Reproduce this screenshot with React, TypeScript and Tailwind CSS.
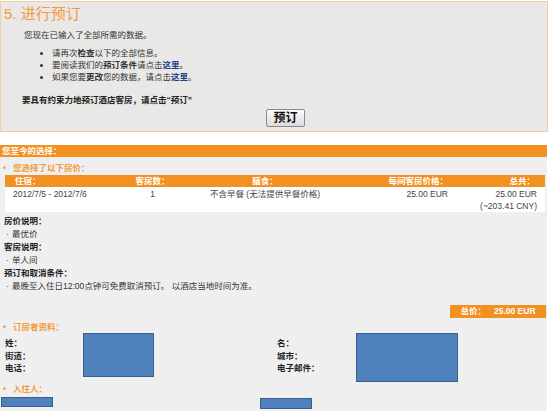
import React from "react";

const font = "font-['Liberation_Sans','Noto_Sans_CJK_SC',sans-serif]";

const Bullet = ({ children }: { children: React.ReactNode }) => (
  <div className="flex">
    <span className="w-[8px] pl-[2px] text-[#555]">·</span>
    <span>{children}</span>
  </div>
);

const SectionHead = ({ children, className = "" }: { children: React.ReactNode; className?: string }) => (
  <div className={`flex font-bold text-[#f39a3a] ${className}`}>
    <span className="w-[13px] pl-[3px]">•</span>
    <span>{children}</span>
  </div>
);

export default function App() {
  return (
    <div className={`w-[553px] h-[411px] overflow-hidden bg-white text-[8.5px] text-[#333] ${font}`}>
      {/* step panel */}
      <div className="mt-[1px] h-[131px] w-[548px] border border-[#f3cfa0] bg-[#e9e8e6]">
        <h1 className="pl-[3px] pt-[3px] text-[15px] leading-[18px] text-[#f39a3c]">5. 进行预订</h1>
        <p className="ml-[23px] mt-[6px] leading-[12px]">您现在已输入了全部所需的数据。</p>
        <ul className="mt-[6px] list-disc pl-[51px] leading-[12px]">
          <li>
            请再次<b>检查</b>以下的全部信息。
          </li>
          <li>
            要阅读我们的<b>预订条件</b>请点击<b className="text-[#1d3f8c]">这里</b>。
          </li>
          <li>
            如果您要<b>更改</b>您的数据，请点击<b className="text-[#1d3f8c]">这里</b>。
          </li>
        </ul>
        <p className="ml-[21px] mt-[11px] font-bold leading-[12px] text-[#222]">
          要具有约束力地预订酒店客房，请点击“预订”
        </p>
        <button className="ml-[265px] mt-[3px] h-[18px] w-[39px] rounded-[2px] border border-[#8a8a8a] bg-gradient-to-b from-[#fbfbfb] to-[#dcdcdc] text-[12px] font-bold leading-[16px] text-[#111]">
          预订
        </button>
      </div>

      {/* selection header */}
      <div className="mt-[13px] h-[12px] w-[547px] bg-[#f39022] pl-[2px] font-bold leading-[12px] text-white">
        您至今的选择：
      </div>

      <div className="h-[254px] w-[547px] bg-[#efefef]">
        <SectionHead className="pt-[5px] leading-[12px]">您选择了以下房价：</SectionHead>

        {/* rate table */}
        <div className="mx-[5px] mt-[1px] w-[540px]">
          <div className="grid h-[12px] grid-cols-[110px_75px_150px_108px_97px] bg-[#f39022] font-bold leading-[12px] text-white">
            <span className="pl-[10px]">住宿：</span>
            <span className="text-center">客房数：</span>
            <span className="text-center">膳食：</span>
            <span className="text-right">每间客房价格：</span>
            <span className="pr-[10px] text-right">总共：</span>
          </div>
          <div className="grid h-[25px] grid-cols-[110px_75px_150px_108px_97px] bg-white pt-[1px] leading-[12px] text-[#444]">
            <span className="pl-[8px]">2012/7/5 - 2012/7/6</span>
            <span className="text-center">1</span>
            <span className="text-center">不含早餐 (无法提供早餐价格)</span>
            <span className="text-right">25.00 EUR</span>
            <span className="pr-[8px] text-right">
              25.00 EUR
              <br />
              (~203.41 CNY)
            </span>
          </div>
        </div>

        {/* descriptions */}
        <div className="mt-[3px] pl-[4px] leading-[13px]">
          <div className="font-bold text-[#222]">房价说明：</div>
          <Bullet>最优价</Bullet>
          <div className="font-bold text-[#222]">客房说明：</div>
          <Bullet>单人间</Bullet>
          <div className="font-bold text-[#222]">预订和取消条件：</div>
          <Bullet>最晚至入住日12:00点钟可免费取消预订。 以酒店当地时间为准。</Bullet>
        </div>

        <div className="mt-[12px] flex justify-end pr-[1px]">
          <div className="flex h-[13px] w-[96px] items-center justify-center gap-[8px] bg-[#f39022] font-bold text-white">
            <span>总价：</span>
            <span>25.00 EUR</span>
          </div>
        </div>

        <SectionHead className="mt-[4px] leading-[11px]">订房者资料：</SectionHead>

        {/* booker data */}
        <div className="grid grid-cols-[276px_271px]">
          <div className="flex">
            <div className="w-[83px] pl-[5px] pt-[4px] font-bold leading-[12.5px] text-[#222]">
              <div>姓：</div>
              <div>街道：</div>
              <div>电话：</div>
            </div>
            <div className="h-[44px] w-[71px] border border-[#3a5f8f] bg-[#4f81bd]" />
          </div>
          <div className="flex">
            <div className="w-[80px] pl-[1px] pt-[4px] font-bold leading-[12.5px] text-[#222]">
              <div>名：</div>
              <div>城市：</div>
              <div>电子邮件：</div>
            </div>
            <div className="h-[49px] w-[102px] border border-[#3a5f8f] bg-[#4f81bd]" />
          </div>
        </div>

        <SectionHead className="mt-[1px] leading-[12px]">入住人：</SectionHead>
        <div className="mt-[2px] flex items-start">
          <div className="ml-[1px] h-[10px] w-[52px] border border-[#3a5f8f] bg-[#4f81bd]" />
          <div className="ml-[207px] mt-[1px] h-[11px] w-[52px] border border-[#3a5f8f] bg-[#4f81bd]" />
        </div>
      </div>
    </div>
  );
}
